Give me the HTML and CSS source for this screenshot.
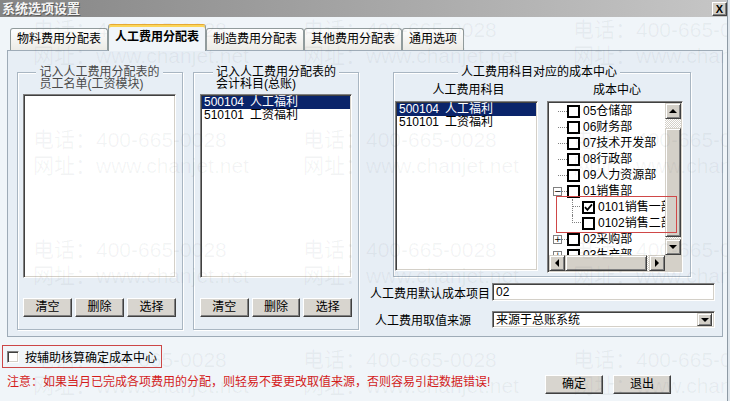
FILE: index.html
```html
<!DOCTYPE html>
<html>
<head>
    <meta charset="UTF-8">
    <title>系统选项设置</title>
    <link rel="stylesheet" href="styles.css">
</head>
<body>
<div class="dialog">
    <div class="titlebar">
        <span class="title">系统选项设置</span>
        <span class="close-btn">X</span>
    </div>

    <div class="tabs">
        <div class="tab">物料费用分配表</div>
        <div class="tab active">人工费用分配表</div>
        <div class="tab">制造费用分配表</div>
        <div class="tab">其他费用分配表</div>
        <div class="tab">通用选项</div>
    </div>

    <div class="panel">
        <div class="group group-list">
            <div class="legend muted">记入人工费用分配表的<br>员工名单(工资模块)</div>
            <div class="listbox"></div>
            <div class="btn-row">
                <button class="btn">清空</button>
                <button class="btn">删除</button>
                <button class="btn">选择</button>
            </div>
        </div>

        <div class="group group-list second">
            <div class="legend">记入人工费用分配表的<br>会计科目(总账)</div>
            <div class="listbox">
                <div class="list-row selected"><span class="code">500104</span>人工福利</div>
                <div class="list-row"><span class="code">510101</span>工资福利</div>
            </div>
            <div class="btn-row">
                <button class="btn">清空</button>
                <button class="btn">删除</button>
                <button class="btn">选择</button>
            </div>
        </div>

        <div class="right-col">
            <div class="group group-cost">
                <div class="legend">人工费用科目对应的成本中心</div>
                <div class="cost-cols">
                    <div class="cost-col subjects">
                        <div class="col-title">人工费用科目</div>
                        <div class="listbox">
                            <div class="list-row selected"><span class="code">500104</span>人工福利</div>
                            <div class="list-row"><span class="code">510101</span>工资福利</div>
                        </div>
                    </div>
                    <div class="cost-col centers">
                        <div class="col-title">成本中心</div>
                        <div class="tree">
                            <div class="tree-main">
                                <div class="tree-items">
                                    <div class="node"><span class="branch"></span><span class="tbox"></span><span class="tlabel">05仓储部</span></div>
                                    <div class="node"><span class="branch"></span><span class="tbox"></span><span class="tlabel">06财务部</span></div>
                                    <div class="node"><span class="branch"></span><span class="tbox"></span><span class="tlabel">07技术开发部</span></div>
                                    <div class="node"><span class="branch"></span><span class="tbox"></span><span class="tlabel">08行政部</span></div>
                                    <div class="node"><span class="branch"></span><span class="tbox"></span><span class="tlabel">09人力资源部</span></div>
                                    <div class="node"><span class="branch has-exp"><span class="expander">−</span></span><span class="tbox"></span><span class="tlabel">01销售部</span></div>
                                    <div class="node child"><span class="branch"><span class="elbow"></span></span><span class="tbox"><svg width="9" height="9" viewBox="0 0 9 9"><path d="M1 4.2 L3.4 6.8 L8 1.4" fill="none" stroke="#000" stroke-width="1.8"/></svg></span><span class="tlabel">0101销售一部</span></div>
                                    <div class="node child last"><span class="branch"><span class="elbow"></span></span><span class="tbox"></span><span class="tlabel">0102销售二部</span></div>
                                    <div class="node"><span class="branch has-exp"><span class="expander">+</span></span><span class="tbox"></span><span class="tlabel">02采购部</span></div>
                                    <div class="node"><span class="branch has-exp"><span class="expander">+</span></span><span class="tbox"></span><span class="tlabel">03生产部</span></div>
                                </div>
                                <div class="vscroll">
                                    <span class="sb-btn"><i class="arr up"></i></span>
                                    <span class="sb-track sb-gap-top"></span>
                                    <span class="sb-thumb v"></span>
                                    <span class="sb-track"></span>
                                    <span class="sb-btn"><i class="arr down"></i></span>
                                </div>
                            </div>
                            <div class="hscroll">
                                <span class="sb-btn"><i class="arr left"></i></span>
                                <span class="sb-thumb h"></span>
                                <span class="sb-track"></span>
                                <span class="sb-btn"><i class="arr right"></i></span>
                                <span class="sb-corner"></span>
                            </div>
                        </div>
                        <div class="mark-box"></div>
                    </div>
                </div>
            </div>

            <div class="form-row">
                <span class="form-label">人工费用默认成本项目</span>
                <div class="textbox">02</div>
            </div>
            <div class="form-row second">
                <span class="form-label indent">人工费用取值来源</span>
                <div class="combo">
                    <span class="combo-text">来源于总账系统</span>
                    <span class="combo-btn"><i class="arr down"></i></span>
                </div>
            </div>
        </div>
    </div>

    <label class="aux-check"><span class="checkbox"></span>按辅助核算确定成本中心</label>

    <div class="footer-row">
        <p class="note">注意：如果当月已完成各项费用的分配，则轻易不要更改取值来源，否则容易引起数据错误!</p>
        <div class="actions">
            <button class="btn wide">确定</button>
            <button class="btn wide">退出</button>
        </div>
    </div>

    <div class="watermark">
        <div class="wm-row"><span>电话：400-665-0028</span><span>电话：400-665-0028</span><span>电话：400-665-0028</span></div>
        <div class="wm-row"><span>网址：www.chanjet.net</span><span>网址：www.chanjet.net</span><span>网址：www.chanjet.net</span></div>
        <div class="wm-row gap"><span>电话：400-665-0028</span><span>电话：400-665-0028</span><span>电话：400-665-0028</span></div>
        <div class="wm-row"><span>网址：www.chanjet.net</span><span>网址：www.chanjet.net</span><span>网址：www.chanjet.net</span></div>
        <div class="wm-row gap"><span>电话：400-665-0028</span><span>电话：400-665-0028</span><span>电话：400-665-0028</span></div>
        <div class="wm-row"><span>网址：www.chanjet.net</span><span>网址：www.chanjet.net</span><span>网址：www.chanjet.net</span></div>
        <div class="wm-row gap"><span>电话：400-665-0028</span><span>电话：400-665-0028</span><span>电话：400-665-0028</span></div>
        <div class="wm-row"><span>网址：www.chanjet.net</span><span>网址：www.chanjet.net</span><span>网址：www.chanjet.net</span></div>
    </div>
</div>
</body>
</html>
```

FILE: styles.css
```css
:root {
    --face: #d4d0c8;
    --panel: #e7eef5;
    --line: #a9b6c2;
}

* {
    box-sizing: border-box;
    margin: 0;
    padding: 0;
}

body {
    background: #dfe6ec;
    font-family: 'Liberation Sans', 'Noto Sans CJK SC', sans-serif;
    font-size: 12px;
    color: #000;
}

.dialog {
    position: relative;
    width: 728px;
    height: 401px;
    overflow: hidden;
    background: #f0f5f9;
    border-right: 1px solid #8e9aa5;
}

/* title bar */
.titlebar {
    height: 17px;
    display: flex;
    align-items: center;
    justify-content: space-between;
    padding-left: 2px;
    background: linear-gradient(to right, #858585, #c6c6c6);
}

.title {
    color: #f4f4f4;
    font-weight: bold;
    font-size: 13px;
    line-height: 17px;
    text-shadow: 1px 1px 0 #5c5c5c;
}

.close-btn {
    width: 15px;
    height: 14px;
    background: var(--face);
    border: 1px solid;
    border-color: #fff #404040 #404040 #fff;
    box-shadow: inset -1px -1px 0 #808080;
    font: bold 11px/12px 'Liberation Sans', sans-serif;
    text-align: center;
}

/* tabs */
.tabs {
    display: flex;
    align-items: flex-end;
    height: 26px;
    margin-top: 7px;
    padding-left: 10px;
}

.tab {
    height: 22px;
    padding: 0 6px;
    line-height: 20px;
    border: 1px solid #919b9c;
    border-bottom: none;
    border-radius: 3px 3px 0 0;
    background: linear-gradient(#fefefe, #ecebe6);
    white-space: nowrap;
}

.tab.active {
    height: 27px;
    margin-bottom: -1px;
    position: relative;
    z-index: 1;
    line-height: 24px;
    font-weight: bold;
    background: #f0f5f9;
    border-top-color: #e6a934;
    box-shadow: inset 0 2px 0 #fbd65a;
}

/* tab page */
.panel {
    display: flex;
    align-items: flex-start;
    width: 716px;
    height: 287px;
    margin-left: 7px;
    padding-left: 9px;
    border: 1px solid #9eabb7;
    background: var(--panel);
}

.group {
    margin-top: 21px;
    border: 1px solid var(--line);
    box-shadow: inset 1px 1px 0 #fff, 1px 1px 0 #fff;
    display: flex;
    flex-direction: column;
}

.legend {
    align-self: center;
    margin-top: -7px;
    padding: 0 3px;
    line-height: 12px;
    background: var(--panel);
    white-space: nowrap;
}

.legend.muted {
    color: #4a4a4a;
}

.group-list {
    width: 166px;
    height: 258px;
    padding: 0 6px 0 5px;
}

.group-list.second {
    margin-left: 10px;
    padding: 0 6px 0 6px;
}

.listbox {
    background: #fff;
    border: 1px solid;
    border-color: #808080 #fff #fff #808080;
    box-shadow: inset 1px 1px 0 #404040, inset -1px -1px 0 var(--face);
    padding: 1px;
}

.group-list .listbox {
    height: 184px;
    margin-top: 4px;
}

.list-row {
    height: 13px;
    line-height: 13px;
    padding-left: 2px;
    white-space: nowrap;
}

.list-row.selected {
    background: #0a246a;
    color: #fff;
}

.code {
    display: inline-block;
    width: 46px;
}

.btn-row {
    display: flex;
    gap: 3px;
    margin-top: 20px;
}

.btn {
    width: 49px;
    height: 19px;
    font-family: inherit;
    font-size: 12px;
    line-height: 15px;
    background: #d8d5cf;
    border: 1px solid;
    border-color: #fff #404040 #404040 #fff;
    box-shadow: inset -1px -1px 0 #808080;
}

/* right column */
.right-col {
    width: 345px;
    margin-left: 11px;
}

.group-cost {
    width: 298px;
    height: 205px;
    margin-left: 23px;
    padding: 0 7px 0 1px;
}

.cost-cols {
    display: flex;
    gap: 9px;
}

.cost-col {
    display: flex;
    flex-direction: column;
}

.subjects {
    width: 143px;
}

.centers {
    width: 136px;
    position: relative;
}

.col-title {
    text-align: center;
    line-height: 12px;
    margin-top: 6px;
    padding-left: 4px;
}

.subjects .listbox {
    height: 170px;
    margin-top: 5px;
}

/* tree */
.tree {
    height: 172px;
    margin-top: 5px;
    border: 1px solid;
    border-color: #808080 #fff #fff #808080;
    box-shadow: inset 1px 1px 0 #404040, inset -1px -1px 0 var(--face);
    padding: 1px;
    background: #fff;
    display: flex;
    flex-direction: column;
}

.tree-main {
    display: flex;
    height: 152px;
}

.tree-items {
    flex: 1;
    overflow: hidden;
}

.node {
    display: flex;
    align-items: center;
    height: 16px;
    white-space: nowrap;
}

.branch {
    display: flex;
    align-items: center;
    align-self: stretch;
    width: 18px;
    padding-left: 9px;
    flex-shrink: 0;
}

.branch::after {
    content: '';
    flex: 1;
    border-top: 1px dotted #808080;
}

.branch.has-exp {
    padding-left: 4px;
}

.expander {
    width: 9px;
    height: 9px;
    border: 1px solid #808080;
    background: #fff;
    font: 9px/7px 'DejaVu Sans', sans-serif;
    text-align: center;
    font-style: normal;
}

.node.child .branch {
    width: 33px;
    padding-left: 23px;
    align-items: flex-start;
}

.node.child .branch::after {
    display: none;
}

.elbow {
    width: 9px;
    height: 16px;
    border-left: 1px dotted #808080;
    background: linear-gradient(to right, #808080 50%, transparent 50%) 0 7px / 2px 1px repeat-x;
}

.node.last .elbow {
    height: 8px;
    background: none;
    border-bottom: 1px dotted #808080;
}

.tbox {
    width: 13px;
    height: 13px;
    border: 2px solid #000;
    background: #fff;
    flex-shrink: 0;
    display: flex;
    align-items: center;
    justify-content: center;
}

.tlabel {
    margin-left: 3px;
    line-height: 16px;
}

.vscroll {
    width: 16px;
    display: flex;
    flex-direction: column;
}

.hscroll {
    height: 16px;
    display: flex;
}

.sb-btn,
.sb-corner {
    width: 16px;
    height: 16px;
    flex-shrink: 0;
    background: var(--face);
    border: 1px solid;
    border-color: var(--face) #404040 #404040 var(--face);
    box-shadow: inset 1px 1px 0 #fff, inset -1px -1px 0 #808080;
    display: flex;
    align-items: center;
    justify-content: center;
}

.sb-corner {
    border: none;
    box-shadow: none;
}

.sb-track {
    flex: 1;
    background: repeating-conic-gradient(#d4d0c8 0 25%, #fff 0 50%) 0 0 / 2px 2px;
}

.sb-gap-top {
    flex: 0 0 9px;
}

.sb-thumb {
    background: var(--face);
    border: 1px solid;
    border-color: var(--face) #404040 #404040 var(--face);
    box-shadow: inset 1px 1px 0 #fff, inset -1px -1px 0 #808080;
}

.sb-thumb.v {
    height: 109px;
}

.sb-thumb.h {
    width: 82px;
}

.arr {
    width: 0;
    height: 0;
    border: 4px solid transparent;
}

.arr.up {
    border-bottom-color: #000;
    margin-top: -4px;
}

.arr.down {
    border-top-color: #000;
    margin-top: 4px;
}

.arr.left {
    border-right-color: #000;
    margin-left: -4px;
}

.arr.right {
    border-left-color: #000;
    margin-left: 4px;
}

/* red annotation over the tree */
.mark-box {
    position: absolute;
    left: 9px;
    top: 118px;
    width: 121px;
    height: 37px;
    border: 1px solid #d04848;
}

/* form rows */
.form-row {
    display: flex;
    align-items: center;
    margin-top: 6px;
}

.form-row.second {
    margin-top: 10px;
}

.form-label {
    width: 122px;
    flex-shrink: 0;
    white-space: nowrap;
}

.form-label.indent {
    padding-left: 5px;
}

.textbox,
.combo {
    width: 223px;
    height: 18px;
    background: #fff;
    border: 1px solid;
    border-color: #808080 #fff #fff #808080;
    box-shadow: inset 1px 1px 0 #404040, inset -1px -1px 0 var(--face);
    padding: 0 3px;
    line-height: 16px;
}

.combo {
    height: 17px;
    display: flex;
    align-items: center;
    padding: 2px;
}

.combo-text {
    flex: 1;
    padding-left: 1px;
}

.combo-btn {
    width: 15px;
    height: 13px;
    background: var(--face);
    border: 1px solid;
    border-color: var(--face) #404040 #404040 var(--face);
    box-shadow: inset 1px 1px 0 #fff, inset -1px -1px 0 #808080;
    display: flex;
    align-items: center;
    justify-content: center;
}

/* footer */
.aux-check {
    display: flex;
    align-items: center;
    width: 160px;
    height: 23px;
    margin: 8px 0 0 2px;
    padding-left: 4px;
    border: 1px solid #cc4646;
}

.checkbox {
    width: 12px;
    height: 12px;
    margin-right: 6px;
    background: #fff;
    border: 1px solid;
    border-color: #808080 #fff #fff #808080;
    box-shadow: inset 1px 1px 0 #404040, inset -1px -1px 0 var(--face);
}

.footer-row {
    display: flex;
    align-items: flex-start;
    margin-top: 7px;
    padding: 0 56px 0 7px;
}

.note {
    color: #d41c1c;
    line-height: 15px;
    white-space: nowrap;
}

.actions {
    display: flex;
    gap: 10px;
    margin-left: auto;
}

.btn.wide {
    width: 58px;
}

/* watermark printed over the screenshot */
.watermark {
    position: absolute;
    inset: 0;
    pointer-events: none;
    padding-top: 17px;
    font-size: 21px;
    line-height: 26px;
    color: rgba(60, 70, 80, 0.06);
}

.wm-row {
    display: flex;
    padding-left: 33px;
    white-space: nowrap;
}

.wm-row.gap {
    margin-top: 58px;
}

.wm-row span {
    width: 270px;
    flex-shrink: 0;
}
```
